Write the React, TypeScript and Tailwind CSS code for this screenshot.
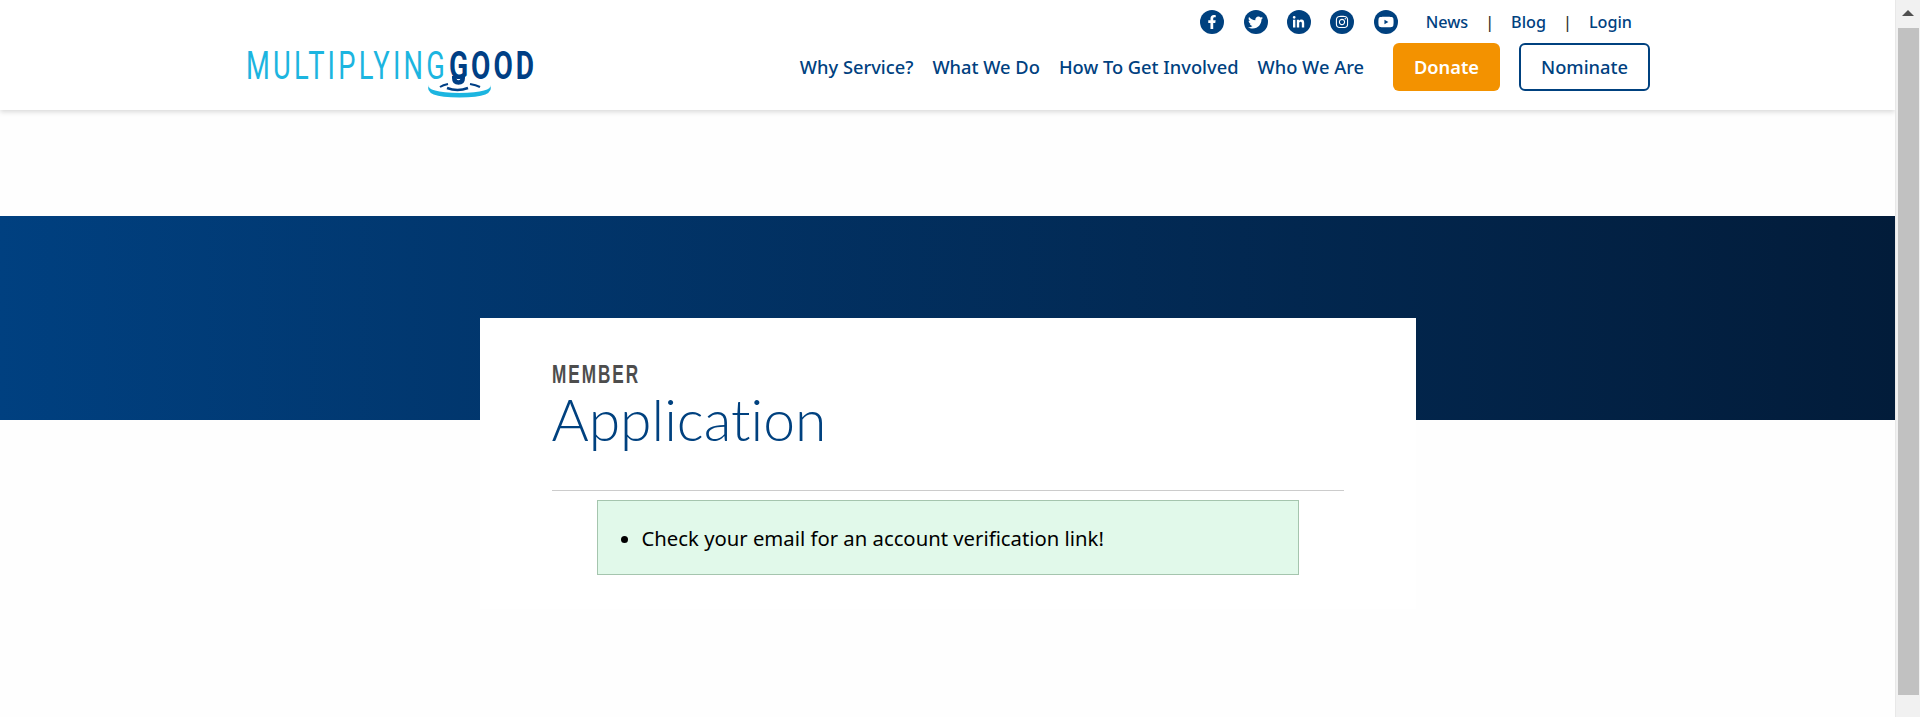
import { FaFacebookF, FaInstagram, FaLinkedinIn, FaTwitter, FaYoutube } from 'react-icons/fa'

const socials = [
  { icon: FaFacebookF, size: 'h-[14px] w-[14px]' },
  { icon: FaTwitter, size: 'h-[15px] w-[15px]' },
  { icon: FaLinkedinIn, size: 'h-[13px] w-[13px]' },
  { icon: FaInstagram, size: 'h-[14px] w-[14px]' },
  { icon: FaYoutube, size: 'h-[16px] w-[16px]' },
]

const navLinks = ['Why Service?', 'What We Do', 'How To Get Involved', 'Who We Are']

function Logo() {
  return (
    <svg width="292" height="64" viewBox="0 0 292 64" className="block">
      <text transform="translate(1 33) scale(0.7 1)" fontFamily="Roboto, sans-serif" fontWeight="400" fontSize="39" fill="#1cb5e0" textLength="284" lengthAdjust="spacing">
        MULTIPLYING
      </text>
      <text transform="translate(204 33) scale(0.72 1)" fontFamily="Roboto, sans-serif" fontWeight="700" fontSize="39" fill="#003f85" textLength="118" lengthAdjust="spacing">
        GOOD
      </text>
      {/* tail of the G dropping into the ripple */}
      <path d="M209.25 30 v2 q0 4.5 4.25 4.5 q4.25 0 4.25 -4.5 v-2" fill="none" stroke="#003f85" strokeWidth="4.5" />
      <path d="M202 42 Q212.5 46 223 42" fill="none" stroke="#003f85" strokeWidth="2.5" />
      <path d="M195 41 Q198 39 203 38 M225 38 Q231 39 235 41" fill="none" stroke="#003f85" strokeWidth="2" />
      <path d="M184 39 Q178 51.5 214.5 51.5 Q251 51.5 245 39 Q248 46 214.5 47 Q181 46 184 39 Z" fill="#1cb5e0" />
    </svg>
  )
}

function Scrollbar() {
  return (
    <div className="flex h-[717px] w-[25px] shrink-0 flex-col items-center border-l border-[#e8e8e8] bg-[#f1f1f1] pt-[10px]">
      <div className="h-0 w-0 border-x-[6px] border-b-[6px] border-x-transparent border-b-[#505050]" />
      <div className="mt-[12px] h-[667px] w-[21px] bg-[#c1c1c1]" />
    </div>
  )
}

export default function App() {
  return (
    <div className="flex h-[717px] w-full overflow-hidden bg-[#fefefe] font-['Noto_Sans',sans-serif]">
      <div className="min-w-0 flex-1">
        {/* Header */}
        <header className="h-[110px] bg-white shadow-[0_2px_5px_rgba(0,0,0,0.15)]">
          <div className="mx-auto flex h-full w-[1405px] items-start justify-between">
            <div className="pt-[46px]">
              <Logo />
            </div>
            <div className="flex flex-col items-end">
              <div className="flex h-[44px] items-center pr-[18px] text-[16.2px] font-medium text-[#00417f]">
                <div className="mr-[28px] flex gap-[19.4px]">
                  {socials.map(({ icon: Icon, size }, index) => (
                    <span key={index} className="flex h-[24px] w-[24px] items-center justify-center rounded-full bg-[#00417f] text-white">
                      <Icon className={size} />
                    </span>
                  ))}
                </div>
                <span>News</span>
                <span className="mx-[17px] text-[#333]">|</span>
                <span>Blog</span>
                <span className="mx-[17px] text-[#333]">|</span>
                <span>Login</span>
              </div>
              <nav className="-mt-px flex items-center text-[18.3px] font-medium text-[#00417f]">
                <div className="mr-[29px] flex gap-[19px]">
                  {navLinks.map((link) => (
                    <span key={link}>{link}</span>
                  ))}
                </div>
                <span className="flex h-[48px] w-[107px] items-center justify-center rounded-[6px] bg-[#f39200] font-semibold text-white">Donate</span>
                <span className="ml-[19px] flex h-[48px] w-[131px] items-center justify-center rounded-[6px] border-2 border-[#00417f] bg-white">Nominate</span>
              </nav>
            </div>
          </div>
        </header>

        {/* Hero band and card */}
        <main className="pt-[106px]">
          <div className="h-[204px] bg-gradient-to-r from-[#004080] to-[#021c3a] pt-[102px]">
            <div className="mx-auto w-[936px] bg-white px-[72px] pb-[34px] pt-[42px]">
              <div className="h-[28px] w-fit origin-left scale-x-[0.66] font-['Liberation_Sans',sans-serif] text-[26px] leading-[28px] font-bold tracking-[3px] text-[#4d4d4d]">MEMBER</div>
              <h1 className="font-['Lato',sans-serif] text-[57px] leading-[62px] font-light text-[#00417f] [font-variant-ligatures:none]">Application</h1>
              <div className="mt-[40px] border-t border-[#cccccc]" />
              <div className="mx-auto mt-[9px] w-[702px] border border-[#a5c5ae] bg-[#e1f9ea] pb-[22px] pl-[44px] pt-[23px] text-[20.3px] leading-[28px] text-black">
                <ul className="list-disc">
                  <li>Check your email for an account verification link!</li>
                </ul>
              </div>
            </div>
          </div>
        </main>
      </div>
      <Scrollbar />
    </div>
  )
}
